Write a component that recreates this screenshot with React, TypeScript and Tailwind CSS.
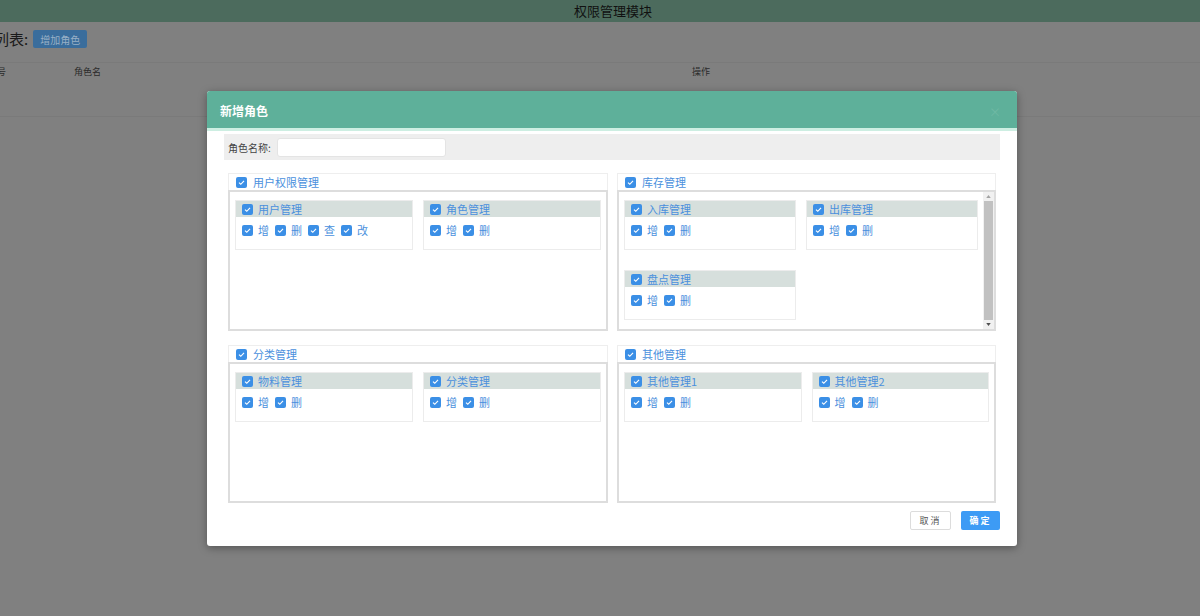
import React from 'react';

const font = { fontFamily: '"Noto Sans CJK SC", "Noto Sans", sans-serif' };

const Check: React.FC = () => (
  <span className="inline-flex h-[11px] w-[11px] shrink-0 items-center justify-center rounded-[2px] bg-[#3b8fe6]">
    <svg viewBox="0 0 10 10" className="h-[9px] w-[9px]">
      <path d="M2.2 5.2 L4.2 7 L7.8 3.2" fill="none" stroke="#fff" strokeWidth="1.3" />
    </svg>
  </span>
);

interface Sub {
  name: string;
  ops: string[];
}

const SubCard: React.FC<{ item: Sub }> = ({ item }) => (
  <div className="h-[50px] border border-[#ececec] bg-white">
    <div className="flex h-[16px] items-center gap-[5px] bg-[#d6dfdc] pl-[6px] text-[11px] text-[#4a90dd]">
      <Check />
      <span>{item.name}</span>
    </div>
    <div className="flex items-center pl-[6px] pt-[5px] text-[11px] text-[#4a90dd]">
      {item.ops.map((op) => (
        <span key={op} className="mr-[6px] flex items-center gap-[5px]">
          <Check />
          <span>{op}</span>
        </span>
      ))}
    </div>
  </div>
);

const Panel: React.FC<{ title: string; items: Sub[]; scroll?: boolean }> = ({ title, items, scroll }) => (
  <div className="flex flex-col">
    <div className="flex h-[17px] items-center gap-[6px] border border-b-0 border-[#eeeeee] pl-[7px] text-[11px] text-[#4a90dd]">
      <Check />
      <span>{title}</span>
    </div>
    <div className="flex h-[141px] border-2 border-[#dddddd]">
      <div className="grid flex-1 content-start grid-cols-2 gap-x-[10px] gap-y-[20px] pl-[5px] pr-[5px] pt-[8px]">
        {items.map((it) => (
          <SubCard key={it.name} item={it} />
        ))}
      </div>
      {scroll && (
        <div className="flex w-[11px] flex-col items-center bg-[#f1f1f1]">
          <div className="flex h-[9px] items-center justify-center">
            <svg viewBox="0 0 6 4" className="h-[3px] w-[5px]">
              <path d="M0 4 L3 0 L6 4 Z" fill="#a3a3a3" />
            </svg>
          </div>
          <div className="w-[9px] flex-1 bg-[#c1c1c1]" />
          <div className="flex h-[9px] items-center justify-center">
            <svg viewBox="0 0 6 4" className="h-[3px] w-[5px]">
              <path d="M0 0 L6 0 L3 4 Z" fill="#505050" />
            </svg>
          </div>
        </div>
      )}
    </div>
  </div>
);

const crud = ['增', '删', '查', '改'];
const two = ['增', '删'];

export default function App() {
  return (
    <div className="relative h-[616px] w-[1200px] overflow-hidden bg-[#808080]" style={font}>
      {/* page behind the mask */}
      <div className="flex h-[22px] items-center justify-center bg-[#4c6b5d] pl-[26px] text-[13px] text-[#111]">
        权限管理模块
      </div>
      <div className="flex h-[40px] items-start gap-[5px] pt-[8px]">
        <span className="ml-[-6px] text-[15px] leading-[18px] text-[#1a1a1a]">列表:</span>
        <span className="flex h-[18px] w-[54px] items-center justify-center rounded-[2px] bg-[#3a6d9c] text-[10px] text-[#98b0c6]">
          增加角色
        </span>
      </div>
      <div className="flex h-[18px] items-center border-t border-[#7a7a7a] text-[9px] text-[#2a2a2a]">
        <span className="ml-[-3px] w-[77px]">号</span>
        <span className="w-[618px]">角色名</span>
        <span>操作</span>
      </div>
      <div className="h-[37px] border-b border-[#7a7a7a]" />

      {/* dialog */}
      <div className="absolute left-[207px] top-[91px] w-[810px] overflow-hidden rounded-[3px] bg-white shadow-[0_2px_8px_rgba(0,0,0,0.35)]">
        <div className="relative flex h-[40px] items-center border-b-[3px] border-[#cdeee2] bg-[#5eb09a] pl-[13px] pt-[2px] text-[12px] font-bold text-white">
          新增角色
          <span className="absolute right-[16px] top-[12px] text-[12px] font-normal text-[#6fb9a4]">×</span>
        </div>
        <div className="px-[17px] pt-[3px]">
          <div className="flex h-[26px] items-center bg-[#eeeeee] pl-[4px] text-[10px] text-[#444]">
            <span className="w-[49px]">角色名称:</span>
            <span className="h-[19px] w-[169px] rounded-[3px] border border-[#e4e4e4] bg-white" />
          </div>
          <div className="grid grid-cols-[380px_379px] gap-x-[9px] gap-y-[14px] px-[4px] pt-[13px]">
            <Panel
              title="用户权限管理"
              items={[
                { name: '用户管理', ops: crud },
                { name: '角色管理', ops: two },
              ]}
            />
            <Panel
              title="库存管理"
              scroll
              items={[
                { name: '入库管理', ops: two },
                { name: '出库管理', ops: two },
                { name: '盘点管理', ops: two },
              ]}
            />
            <Panel
              title="分类管理"
              items={[
                { name: '物料管理', ops: two },
                { name: '分类管理', ops: two },
              ]}
            />
            <Panel
              title="其他管理"
              items={[
                { name: '其他管理1', ops: two },
                { name: '其他管理2', ops: two },
              ]}
            />
          </div>
          <div className="flex justify-end gap-[10px] pb-[16px] pt-[8px]">
            <span className="flex h-[19px] w-[41px] items-center justify-center rounded-[2px] border border-[#dcdcdc] text-[9px] tracking-[2px] text-[#555]">
              取消
            </span>
            <span className="flex h-[19px] w-[39px] items-center justify-center rounded-[2px] bg-[#3d9bf5] text-[9px] font-bold tracking-[2px] text-white">
              确定
            </span>
          </div>
        </div>
      </div>
    </div>
  );
}
